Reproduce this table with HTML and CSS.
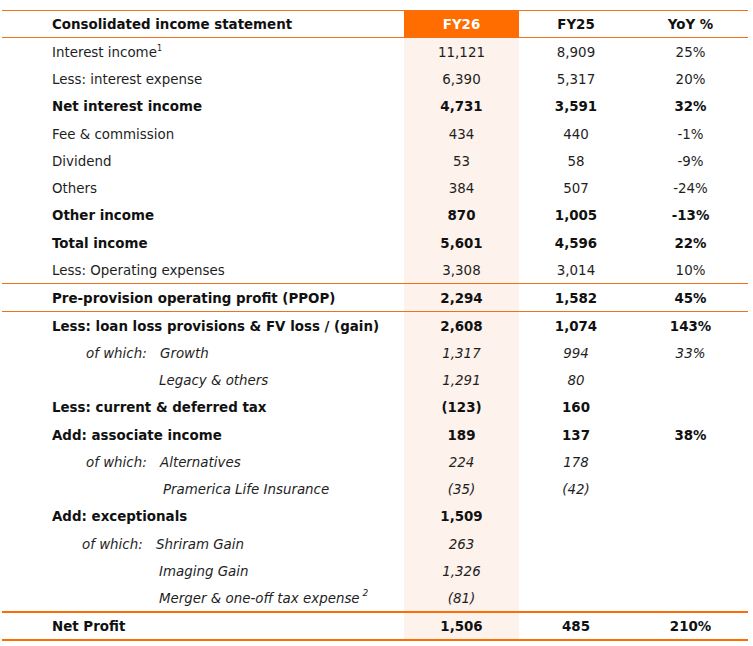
FILE: index.html
```html
<!DOCTYPE html>
<html lang="en">
<head>
<meta charset="utf-8">
<title>Consolidated income statement</title>
<link rel="stylesheet" href="styles.css">
</head>
<body>
<div class="sheet">
  <div class="row head">
    <div class="lab b">Consolidated income statement</div>
    <div class="v fy26h">FY26</div>
    <div class="v b">FY25</div>
    <div class="v b">YoY %</div>
  </div>
  <div class="body">
    <div class="row"><div class="lab">Interest income<sup class="s1">1</sup></div><div class="v c26">11,121</div><div class="v">8,909</div><div class="v">25%</div></div>
    <div class="row"><div class="lab">Less: interest expense</div><div class="v c26">6,390</div><div class="v">5,317</div><div class="v">20%</div></div>
    <div class="row b tall"><div class="lab">Net interest income</div><div class="v c26">4,731</div><div class="v">3,591</div><div class="v">32%</div></div>
    <div class="row"><div class="lab">Fee &amp; commission</div><div class="v c26">434</div><div class="v">440</div><div class="v">-1%</div></div>
    <div class="row"><div class="lab">Dividend</div><div class="v c26">53</div><div class="v">58</div><div class="v">-9%</div></div>
    <div class="row"><div class="lab">Others</div><div class="v c26">384</div><div class="v">507</div><div class="v">-24%</div></div>
    <div class="row b tall"><div class="lab">Other income</div><div class="v c26">870</div><div class="v">1,005</div><div class="v">-13%</div></div>
    <div class="row b"><div class="lab">Total income</div><div class="v c26">5,601</div><div class="v">4,596</div><div class="v">22%</div></div>
    <div class="row"><div class="lab">Less: Operating expenses</div><div class="v c26">3,308</div><div class="v">3,014</div><div class="v">10%</div></div>
    <div class="row b ppop"><div class="lab">Pre-provision operating profit (PPOP)</div><div class="v c26">2,294</div><div class="v">1,582</div><div class="v">45%</div></div>
    <div class="row b"><div class="lab">Less: loan loss provisions &amp; FV loss / (gain)</div><div class="v c26">2,608</div><div class="v">1,074</div><div class="v">143%</div></div>
    <div class="row i"><div class="lab ow"><span class="owl">of which:</span>Growth</div><div class="v c26">1,317</div><div class="v">994</div><div class="v">33%</div></div>
    <div class="row i"><div class="lab sub">Legacy &amp; others</div><div class="v c26">1,291</div><div class="v">80</div><div class="v"></div></div>
    <div class="row b tall"><div class="lab">Less: current &amp; deferred tax</div><div class="v c26">(123)</div><div class="v">160</div><div class="v"></div></div>
    <div class="row b"><div class="lab">Add: associate income</div><div class="v c26">189</div><div class="v">137</div><div class="v">38%</div></div>
    <div class="row i"><div class="lab ow"><span class="owl">of which:</span>Alternatives</div><div class="v c26">224</div><div class="v">178</div><div class="v"></div></div>
    <div class="row i"><div class="lab sub2">Pramerica Life Insurance</div><div class="v c26">(35)</div><div class="v">(42)</div><div class="v"></div></div>
    <div class="row b tall"><div class="lab">Add: exceptionals</div><div class="v c26">1,509</div><div class="v"></div><div class="v"></div></div>
    <div class="row i"><div class="lab ow ow2"><span class="owl">of which:</span>Shriram Gain</div><div class="v c26">263</div><div class="v"></div><div class="v"></div></div>
    <div class="row i"><div class="lab sub">Imaging Gain</div><div class="v c26">1,326</div><div class="v"></div><div class="v"></div></div>
    <div class="row i"><div class="lab sub">Merger &amp; one-off tax expense <sup class="s2">2</sup></div><div class="v c26">(81)</div><div class="v"></div><div class="v"></div></div>
    <div class="row b net"><div class="lab">Net Profit</div><div class="v c26">1,506</div><div class="v">485</div><div class="v">210%</div></div>
  </div>
</div>
</body>
</html>
```
FILE: styles.css
```css
html, body {
  margin: 0;
  padding: 0;
  background: #ffffff;
}
body {
  padding: 10px 0 0 2px;
  font-family: "DejaVu Sans", "Liberation Sans", sans-serif;
  font-size: 13.4px;
  color: #1e1e1e;
}
.sheet {
  width: 746px;
  border-top: 1px solid #f0701c;
}
.row {
  display: grid;
  grid-template-columns: 402px 115px 114px 115px;
  height: 27px;
  align-items: stretch;
}
.row.tall {
  height: 28px;
}
.row > div {
  display: flex;
  align-items: center;
  white-space: nowrap;
  padding-top: 1px;
}
.head {
  height: 26px;
  border-bottom: 1px solid #f0701c;
  color: #111;
}
.head > div {
  padding-top: 0;
}
.lab {
  padding-left: 50px;
}
.v {
  justify-content: center;
}
.b {
  font-weight: bold;
  color: #111;
}
.i {
  font-style: italic;
}
.fy26h {
  background: #ff6d00;
  color: #ffffff;
  font-weight: bold;
}
.c26 {
  background: #fdf2ec;
}
.ppop {
  border-top: 1px solid #f0701c;
  border-bottom: 1px solid #f0701c;
  height: 27px;
}
.net {
  border-top: 2px solid #ff6d00;
  border-bottom: 2px solid #ff6d00;
  height: 26px;
}
.ow {
  padding-left: 84px;
}
.ow2 {
  padding-left: 80px;
}
.owl {
  display: inline-block;
  width: 74px;
}
.sub {
  padding-left: 157px;
}
.sub2 {
  padding-left: 161px;
}
.s1 {
  font-size: 8px;
  align-self: flex-start;
  margin-top: 6px;
  line-height: 1;
}
.s2 {
  font-size: 9px;
  align-self: flex-start;
  margin-top: 4px;
  margin-left: 3px;
  line-height: 1;
}
```
